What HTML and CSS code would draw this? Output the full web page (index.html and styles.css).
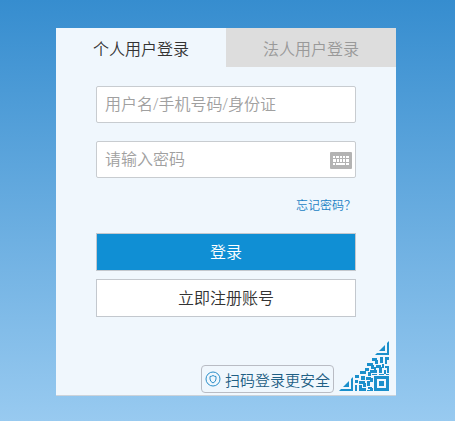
FILE: index.html
```html
<!DOCTYPE html>
<html lang="zh-CN">
<head>
    <meta charset="UTF-8" />
    <meta name="viewport" content="width=device-width, initial-scale=1.0" />
    <title>用户登录</title>
    <link rel="stylesheet" href="styles.css">
</head>
<body>
    <div class="login-box">
        <div class="tabs">
            <button type="button" class="tab active">个人用户登录</button>
            <button type="button" class="tab">法人用户登录</button>
        </div>

        <form class="login-form">
            <div class="field">
                <input type="text" class="field-input" aria-label="用户名" placeholder="用户名/手机号码/身份证">
            </div>
            <div class="field">
                <input type="password" class="field-input" aria-label="密码" placeholder="请输入密码">
                <svg class="keyboard" viewBox="0 0 22 17">
                    <rect width="22" height="17" rx="1" fill="#b3b3b3"/>
                    <path fill="#fff" d="M3 4h2v2H3zM6 4h3v2H6zM10 4h2v2h-2zM13 4h2v2h-2zM16 4h3v2h-3zM3 7h3v3H3zM7 7h2v3H7zM10 7h2v3h-2zM13 7h2v3h-2zM16 7h3v3h-3zM3 11h2v2H3zM6 11h9v2H6zM16 11h3v2h-3z"/>
                </svg>
            </div>
            <a href="#" class="forgot">忘记密码？</a>
            <button type="submit" class="btn btn-login">登录</button>
            <button type="button" class="btn btn-register">立即注册账号</button>
        </form>

        <div class="scan">
            <button type="button" class="scan-tip">
                <svg class="shield" viewBox="0 0 16 16" fill="none" stroke="#2b8fc9">
                    <circle cx="8" cy="8" r="7"/>
                    <path d="M8 4.5 Q9.500 5.500 11 5.500 V8 Q11 10.500 8 12 Q5 10.500 5 8 V5.500 Q6.500 5.500 8 4.500Z"/>
                </svg>
                扫码登录更安全
            </button>
            <!-- corner of the QR code, cut along the diagonal -->
            <svg class="qr" viewBox="0 0 50 50">
                <clipPath id="corner"><path d="M50 0V50H0z"/></clipPath>
                <g clip-path="url(#corner)" fill="#1a8fcb">
                    <path fill-rule="evenodd" d="M36 0h14v14H36zM38 2v10h10V2z"/>
                    <path d="M40 4h6v6h-6z"/>
                    <path fill-rule="evenodd" d="M0 36h14v14H0zM2 38v10h10V38z"/>
                    <path d="M4 40h6v6H4z"/>
                    <path fill-rule="evenodd" d="M35 35h15v15H35zM38 38v9h9v-9z"/>
                    <path d="M40 40h5v5h-5z"/>
                    <path d="M33 17h5v3h-5zM36 19h3v4h-3zM41 16h3v6h-3zM46 16h4v3h-4zM46 18h2v5h-2zM28 22h6v3h-6zM32 24h3v4h-3zM37 24h5v3h-5zM40 26h3v6h-3zM43 23h2v4h-2zM46 25h4v2h-4zM48 26h2v6h-2zM26 27h4v3h-4zM31 29h7v3h-7zM35 26h2v4h-2zM45 29h2v4h-2zM21 30h6v3h-6zM29 31h3v4h-3zM33 33h5v1h-5zM40 33h5v1h-5zM47 33h3v1h-3zM16 34h4v3h-4zM22 35h4v4h-4zM27 36h5v3h-5zM31 37h3v4h-3zM16 39h3v3h-3zM20 40h6v3h-6zM24 42h3v4h-3zM28 40h3v5h-3zM16 44h2v6h-2zM20 44h3v6h-3zM22 47h5v3h-5zM29 46h4v2h-4zM31 47h3v3h-3zM28 49h5v1h-5z"/>
                </g>
            </svg>
        </div>
    </div>
</body>
</html>
```
FILE: styles.css
```css
* {
    box-sizing: border-box;
}
body {
    margin: 0;
    padding: 28px 3px 25px 0;
    min-height: 100vh;
    font-family: "Open Sans", "Noto Sans CJK SC", sans-serif;
    font-size: 16px;
    font-weight: 350;
    background: linear-gradient(#368dcf, #98caf0);
}
button, input {
    font: inherit;
}
button {
    padding: 0;
    cursor: pointer;
}
.login-box {
    max-width: 340px;
    margin: 0 auto;
    background: #f0f7fd;
    border-bottom: 1px solid #ccd3da;
}

/* Tabs */
.tabs {
    display: flex;
}
.tab {
    flex: 1;
    height: 39px;
    border: none;
    background: #ddd;
    color: #999;
}
.tab.active {
    background: #f0f7fd;
    color: #333;
}

/* Form */
.login-form {
    display: flex;
    flex-direction: column;
    padding: 19px 40px 0;
}
.field {
    position: relative;
    margin-bottom: 18px;
}
.field-input {
    display: block;
    width: 100%;
    height: 37px;
    padding: 0 8px 2px;
    border: 1px solid #c8ccd0;
    border-radius: 2px;
    background: #fff;
}
.field-input::placeholder {
    color: #a0a0a0;
}
.keyboard {
    position: absolute;
    right: 4px;
    top: 11px;
    width: 22px;
    height: 17px;
}
.forgot {
    align-self: flex-end;
    font-size: 12px;
    line-height: 20px;
    color: #1a7fc4;
    text-decoration: none;
    margin-bottom: 17px;
}
.btn {
    height: 38px;
    padding-bottom: 2px;
    border: 1px solid #c3c8ce;
    background: #fff;
    color: #333;
}
.btn-login {
    background: #108fd4;
    color: #fff;
    margin-bottom: 8px;
}

/* Scan to log in */
.scan {
    display: flex;
    justify-content: flex-end;
    align-items: flex-end;
    gap: 5px;
    padding: 24px 7px 2px 0;
}
.scan-tip {
    display: flex;
    align-items: center;
    gap: 4px;
    height: 28px;
    padding: 0 3px;
    border: 1px solid #b9bcc4;
    border-radius: 4px;
    background: #f0f7fd;
    color: #1f5f85;
    font-size: 15px;
}
.shield {
    width: 16px;
    height: 16px;
}
.qr {
    width: 50px;
    height: 50px;
    margin-bottom: 2px;
}
```
